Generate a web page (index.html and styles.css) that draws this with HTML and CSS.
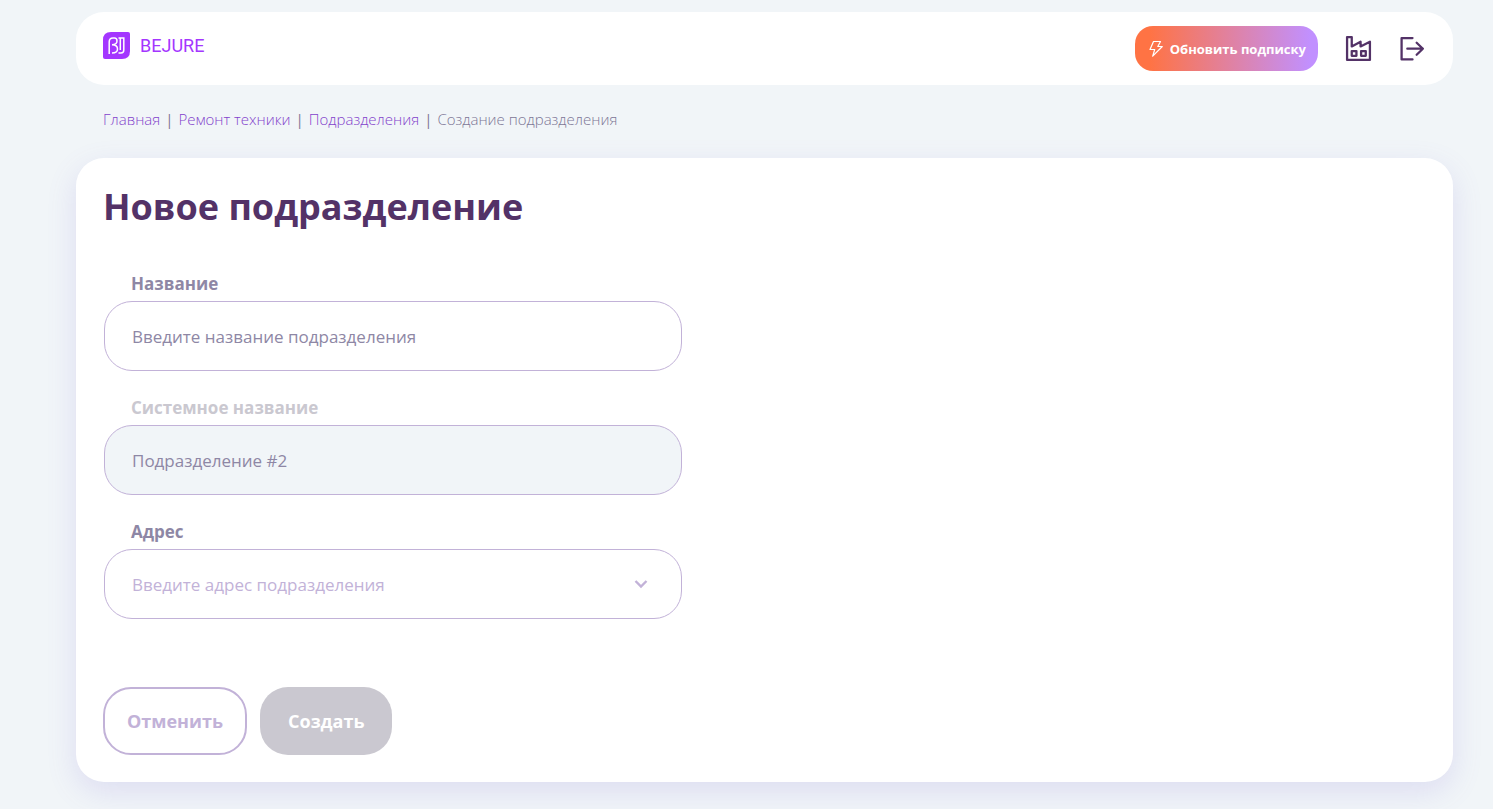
FILE: index.html
```html
<!DOCTYPE html>
<html lang="ru">
<head>
<meta charset="utf-8">
<meta name="viewport" content="width=device-width, initial-scale=1">
<title>Новое подразделение</title>
<link rel="stylesheet" href="styles.css">
</head>
<body>
<div class="page">
  <header class="topbar">
    <a class="logo" href="#">
      <svg class="logo-mark" viewBox="0 0 27 27" aria-hidden="true">
        <path fill="#a436ff" d="M8 0H25Q27 0 27 2V19Q27 27 19 27H2Q0 27 0 25V8Q0 0 8 0Z"/>
        <path fill="none" stroke="#fff" stroke-width="1.5" d="M6.200 22V10Q6.200 6 10 6H11.500Q14 6 14 9Q14 12.500 9 12.800Q14.500 13 14.500 17Q14.500 21 9 21M15.500 6H20.800V18Q20.800 21 18 21H15.500M17.300 6V18"/>
      </svg>
      <span class="logo-name">BEJURE</span>
    </a>
    <div class="actions">
      <button class="upgrade" type="button">
        <svg class="bolt" viewBox="0 0 16 18" aria-hidden="true"><path d="M5.500 1.500H12.500L9.800 6.500H14.300L4.700 16.200L6.700 9.500H2Z"/></svg>
        <span>Обновить подписку</span>
      </button>
      <button class="icon-button" type="button" aria-label="Организация">
        <svg viewBox="0 0 26 26" aria-hidden="true"><path d="M2 2H6.500V11L15 6.500V11L24 6.500V24H2ZM6.500 15.500H11V20H6.500ZM15.500 15.500H20V20H15.500Z"/></svg>
      </button>
      <button class="icon-button" type="button" aria-label="Выйти">
        <svg viewBox="0 0 26 26" aria-hidden="true"><path d="M13 3H2.500V23.500H13M8 13.200H23M17 7.500L23 13.200L17 19"/></svg>
      </button>
    </div>
  </header>

  <nav class="crumbs" aria-label="Навигация">
    <a href="#">Главная</a><span class="sep">|</span><a href="#">Ремонт техники</a><span class="sep">|</span><a href="#">Подразделения</a><span class="sep">|</span><span>Создание подразделения</span>
  </nav>

  <main class="card">
    <h1>Новое подразделение</h1>
    <form class="form">
      <div class="field">
        <label for="name">Название</label>
        <input id="name" type="text" placeholder="Введите название подразделения">
      </div>
      <div class="field field-disabled">
        <label for="system-name">Системное название</label>
        <input id="system-name" type="text" value="Подразделение #2" disabled>
      </div>
      <div class="field field-select">
        <label for="address">Адрес</label>
        <div class="select-wrap">
          <select id="address"><option>Введите адрес подразделения</option></select>
          <svg class="chevron" viewBox="0 0 14 10" aria-hidden="true"><path d="M1.500 2L7 7.500L12.500 2"/></svg>
        </div>
      </div>
      <div class="buttons">
        <button class="button cancel" type="button">Отменить</button>
        <button class="button create" type="submit" disabled>Создать</button>
      </div>
    </form>
  </main>
</div>
</body>
</html>
```
FILE: styles.css
```css
* {
  box-sizing: border-box;
}

body {
  margin: 0;
  min-height: 100vh;
  background: #f1f5f8;
  color: #8e87a5;
  font-family: "Open Sans", "Noto Sans", sans-serif;
}

button,
input,
select {
  font: inherit;
}

.page {
  padding: 12px 40px 27px 76px;
}

.topbar {
  display: flex;
  align-items: center;
  justify-content: space-between;
  padding: 14px 27px;
  border-radius: 28px;
  background: #fff;
}

.logo {
  display: flex;
  align-items: center;
  gap: 10px;
  padding-bottom: 6px;
  color: #a436ff;
  text-decoration: none;
}

.logo-mark {
  width: 27px;
  height: 27px;
}

.logo-name {
  font-family: Roboto, "Liberation Sans", sans-serif;
  font-size: 18px;
  line-height: 27px;
}

.actions {
  display: flex;
  align-items: center;
  gap: 27px;
}

.upgrade {
  display: flex;
  align-items: center;
  gap: 6px;
  height: 45px;
  padding: 0 12px 0 13px;
  border: 0;
  border-radius: 18px;
  background: linear-gradient(90deg, #ff7344 8%, #c190ff 96%);
  color: #fff;
  font-size: 13px;
  font-weight: 700;
}

.bolt {
  width: 16px;
  height: 18px;
  fill: none;
  stroke: #fff;
  stroke-width: 1.2;
  stroke-linejoin: round;
}

.icon-button {
  display: flex;
  padding: 0;
  border: 0;
  background: none;
}

.icon-button svg {
  width: 27px;
  height: 27px;
  fill: none;
  stroke: #533267;
  stroke-width: 2.2;
  stroke-linejoin: round;
  stroke-linecap: round;
}

.crumbs {
  display: flex;
  padding: 23px 27px 28px;
  font-size: 15px;
  font-weight: 300;
  line-height: 22px;
}

.crumbs a {
  color: #8342cc;
  text-decoration: none;
}

.crumbs span {
  color: #7d7596;
}

.sep {
  padding: 0 5px;
  font-weight: 400;
}

.card {
  padding: 25px 27px 27px;
  border-radius: 28px;
  background: #fff;
  box-shadow: 0 10px 30px rgba(120, 100, 210, 0.16);
}

h1 {
  margin: 0 0 40px;
  color: #533267;
  font-size: 36px;
  font-weight: 700;
  line-height: 48px;
}

.form {
  display: flex;
  flex-direction: column;
  gap: 24px;
}

.field {
  display: flex;
  flex-direction: column;
  gap: 4px;
  width: 43.7%;
  margin-left: 1px;
}

.field label {
  padding-left: 27px;
  font-size: 17px;
  font-weight: 700;
  line-height: 26px;
}

.field-disabled label {
  color: #cac8d0;
}

.field input,
.field select {
  width: 100%;
  height: 70px;
  padding: 0 27px;
  border: 1px solid #c2b2d8;
  border-radius: 28px;
  background: #fff;
  color: #8e87a5;
  font-size: 17px;
}

.field input::placeholder {
  color: #8e87a5;
  opacity: 1;
}

.field input:disabled {
  background: #f1f5f8;
}

.select-wrap {
  display: grid;
  align-items: center;
}

.select-wrap > * {
  grid-area: 1 / 1;
}

.field select {
  appearance: none;
  color: #c2b2d8;
}

.chevron {
  justify-self: end;
  width: 14px;
  height: 10px;
  margin-right: 34px;
  fill: none;
  stroke: #c2b2d8;
  stroke-width: 2.4;
  pointer-events: none;
}

.buttons {
  display: flex;
  gap: 13px;
  padding-top: 44px;
}

.button {
  height: 68px;
  border-radius: 28px;
  font-size: 18px;
  font-weight: 700;
}

.cancel {
  padding: 0 22px;
  border: 2px solid #c2b2d8;
  background: #fff;
  color: #c2b2d8;
}

.create {
  padding: 0 28px;
  border: 0;
  background: #cac8d0;
  color: #fff;
}
```
